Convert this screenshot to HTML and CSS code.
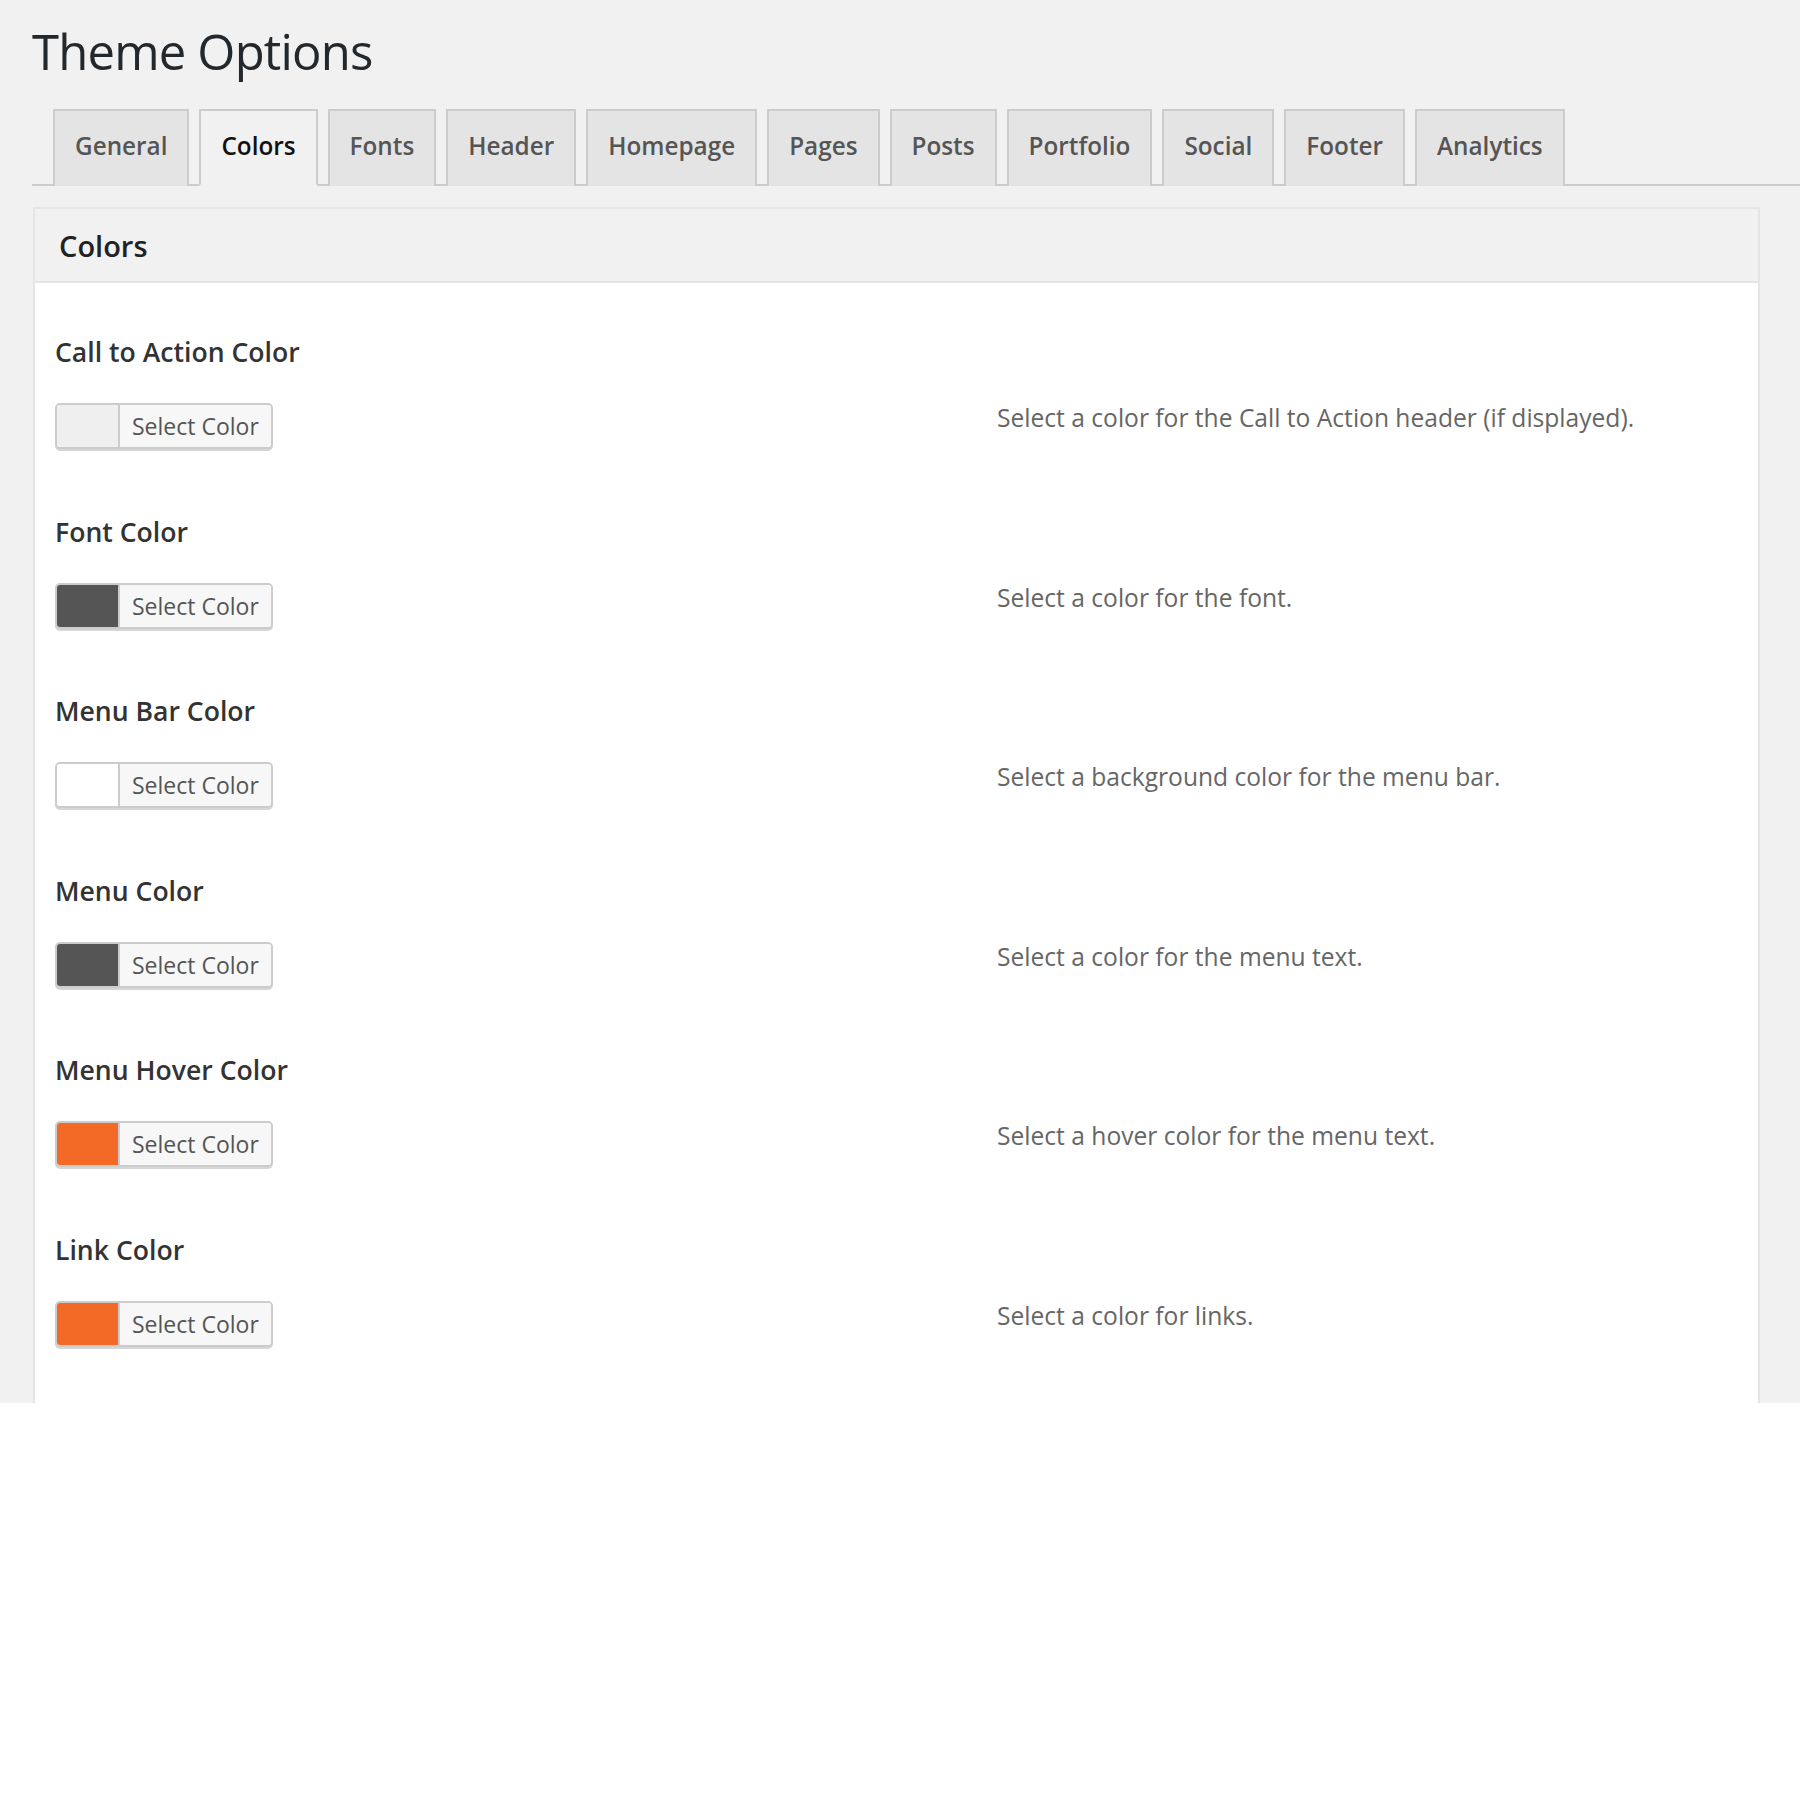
FILE: index.html
```html
<!DOCTYPE html>
<html lang="en">
<head>
<meta charset="utf-8">
<title>Theme Options</title>
<link rel="stylesheet" href="styles.css">
</head>
<body>
<div class="screen">
  <h1 class="page-title">Theme Options</h1>
  <nav class="tabs">
    <a class="tab">General</a>
    <a class="tab active">Colors</a>
    <a class="tab">Fonts</a>
    <a class="tab">Header</a>
    <a class="tab">Homepage</a>
    <a class="tab">Pages</a>
    <a class="tab">Posts</a>
    <a class="tab">Portfolio</a>
    <a class="tab">Social</a>
    <a class="tab">Footer</a>
    <a class="tab">Analytics</a>
  </nav>
  <section class="panel">
    <h2 class="panel-head">Colors</h2>
    <div class="panel-body">
      <div class="option">
        <h4 class="label">Call to Action Color</h4>
        <div class="row">
          <div class="controls"><span class="picker"><span class="swatch sw-light"></span><span class="pick-text">Select Color</span></span></div>
          <p class="explain">Select a color for the Call to Action header (if displayed).</p>
        </div>
      </div>
      <div class="option">
        <h4 class="label">Font Color</h4>
        <div class="row">
          <div class="controls"><span class="picker"><span class="swatch sw-dark"></span><span class="pick-text">Select Color</span></span></div>
          <p class="explain">Select a color for the font.</p>
        </div>
      </div>
      <div class="option">
        <h4 class="label">Menu Bar Color</h4>
        <div class="row">
          <div class="controls"><span class="picker"><span class="swatch sw-white"></span><span class="pick-text">Select Color</span></span></div>
          <p class="explain">Select a background color for the menu bar.</p>
        </div>
      </div>
      <div class="option">
        <h4 class="label">Menu Color</h4>
        <div class="row">
          <div class="controls"><span class="picker"><span class="swatch sw-dark"></span><span class="pick-text">Select Color</span></span></div>
          <p class="explain">Select a color for the menu text.</p>
        </div>
      </div>
      <div class="option">
        <h4 class="label">Menu Hover Color</h4>
        <div class="row">
          <div class="controls"><span class="picker"><span class="swatch sw-orange"></span><span class="pick-text">Select Color</span></span></div>
          <p class="explain">Select a hover color for the menu text.</p>
        </div>
      </div>
      <div class="option">
        <h4 class="label">Link Color</h4>
        <div class="row">
          <div class="controls"><span class="picker"><span class="swatch sw-orange"></span><span class="pick-text">Select Color</span></span></div>
          <p class="explain">Select a color for links.</p>
        </div>
      </div>
    </div>
  </section>
</div>
</body>
</html>
```
FILE: styles.css
```css
html, body {
  margin: 0;
  padding: 0;
  background: #ffffff;
}

body {
  font-family: "Open Sans", "Liberation Sans", sans-serif;
  color: #444;
}

.screen {
  background: #f1f1f1;
  height: 1403px;
  overflow: hidden;
  padding-left: 32px;
}

.page-title {
  margin: 0;
  padding-top: 21px;
  font-size: 49px;
  line-height: 61px;
  letter-spacing: -0.8px;
  font-weight: 400;
  color: #23282d;
}

.tabs {
  display: flex;
  margin-top: 27px;
  padding-left: 21px;
  border-bottom: 2px solid #cccccc;
}

.tab {
  display: block;
  margin: 0 10px -2px 0;
  padding: 17px 20px 22px;
  font-size: 24.3px;
  line-height: 36px;
  font-weight: 600;
  color: #555;
  background: #e4e4e4;
  border: 2px solid #cccccc;
  border-bottom: none;
}

.tab.active {
  background: #f1f1f1;
  color: #111;
  border-bottom: 2px solid #f1f1f1;
  padding-bottom: 20px;
}

.panel {
  margin: 21px 40px 0 1px;
  border: 2px solid #e5e5e5;
  border-bottom: none;
  background: #ffffff;
  height: 1400px;
}

.panel-head {
  margin: 0;
  padding: 17px 24px 15px;
  font-size: 29px;
  line-height: 40px;
  font-weight: 600;
  color: #222;
  background: #f1f1f1;
  border-bottom: 2px solid #e5e5e5;
}

.panel-body {
  padding: 51px 20px 0 20px;
}

.option {
  margin-bottom: 61.5px;
}

.label {
  margin: 0 0 33px;
  font-size: 26.6px;
  line-height: 36px;
  font-weight: 600;
  color: #333;
}

.row {
  display: flex;
  align-items: flex-start;
}

.controls {
  width: 942px;
  flex: none;
}

.picker {
  display: inline-flex;
  height: 42px;
  border: 2px solid #cccccc;
  border-radius: 5px;
  box-shadow: 0 2px 0 #d6d6d6;
  overflow: hidden;
  background: #f7f7f7;
}

.swatch {
  display: block;
  width: 61px;
}

.sw-light { background: #efefef; }
.sw-dark { background: #555555; }
.sw-white { background: #ffffff; }
.sw-orange { background: #f26a25; }

.pick-text {
  display: block;
  padding: 0 12px;
  border-left: 2px solid #cccccc;
  font-size: 23px;
  line-height: 42px;
  color: #555;
  background: #f7f7f7;
}

.explain {
  margin: -1px 0 0;
  font-size: 24.6px;
  line-height: 32px;
  color: #666;
}
```
